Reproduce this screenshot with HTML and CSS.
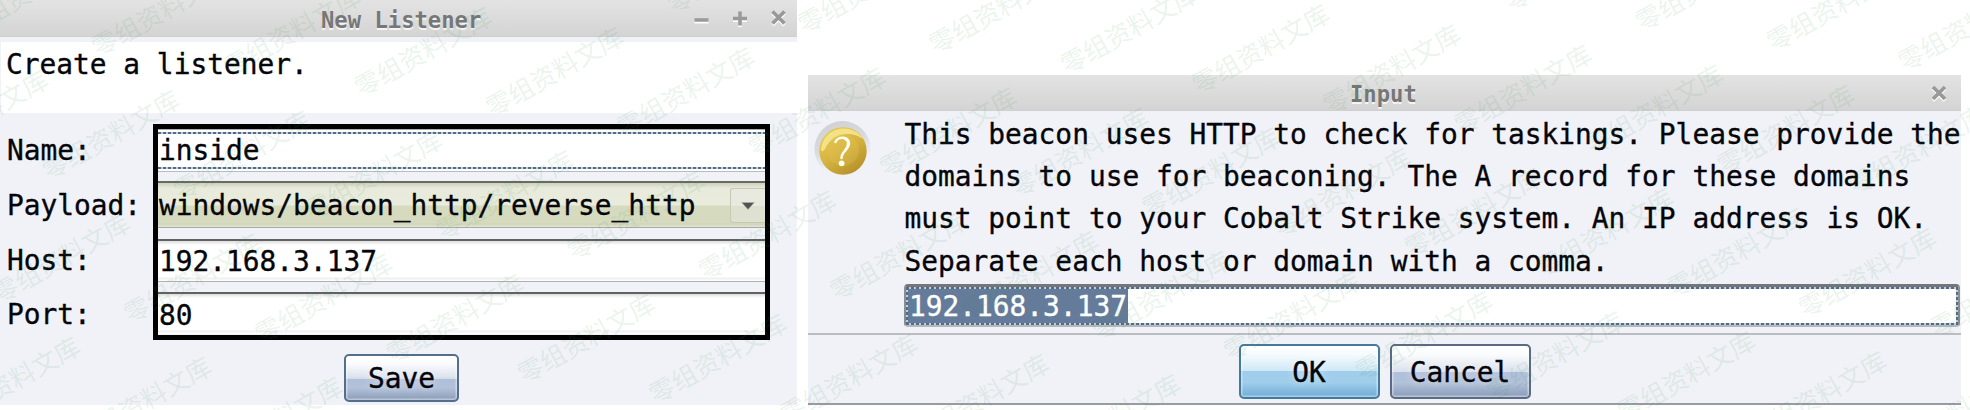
FILE: index.html
```html
<!DOCTYPE html>
<html lang="en">
<head>
<meta charset="utf-8">
<title>New Listener</title>
<link rel="stylesheet" href="styles.css">
</head>
<body>
<main class="desktop">
  <section class="window listener">
    <header class="titlebar">
      <span class="title">New Listener</span>
      <svg class="controls" width="100" height="24" viewBox="0 0 100 24">
        <g fill="none" stroke="#fff" stroke-width="3.6" transform="translate(0 1.6)"><path d="M4.500 12h14M43 10.500h14M50 3.500v14M82.500 3.500l12 12M94.500 3.500l-12 12"/></g>
        <g fill="none" stroke="#999" stroke-width="3.6"><path d="M4.500 12h14M43 10.500h14M50 3.500v14M82.500 3.500l12 12M94.500 3.500l-12 12"/></g>
      </svg>
    </header>
    <p class="intro">Create a listener.</p>
    <div class="form">
      <div class="labels"><label>Name:</label><label>Payload:</label><label>Host:</label><label>Port:</label></div>
      <div class="fields">
        <div class="field name">inside</div>
        <div class="field payload"><span>windows/beacon_http/reverse_http</span>
          <span class="drop"><svg width="14" height="8" viewBox="0 0 14 8"><path d="M0 0h14L7 8z" fill="#aaaba0"/><path d="M1.500 1h11L7 7z" fill="#50534f"/></svg></span>
        </div>
        <div class="field host">192.168.3.137</div>
        <div class="field port">80</div>
      </div>
    </div>
    <div class="button save">Save</div>
  </section>

  <section class="window input">
    <header class="titlebar">
      <span class="title">Input</span>
      <svg class="close" width="20" height="22" viewBox="0 0 20 22">
        <path d="M4 5.600l12 12M16 5.600l-12 12" stroke="#fff" stroke-width="3.600"/>
        <path d="M4 4l12 12M16 4l-12 12" stroke="#999" stroke-width="3.600"/>
      </svg>
    </header>
    <div class="body">
      <svg class="question" width="60" height="60" viewBox="0 0 60 60">
        <defs>
          <linearGradient id="gold" x1=".1" y1="0" x2=".8" y2="1"><stop offset="0" stop-color="#e8cc55"/><stop offset=".5" stop-color="#d6b440"/><stop offset="1" stop-color="#b38d27"/></linearGradient>
          <linearGradient id="rim" x2=".35" y2="1"><stop offset="0" stop-color="#cfcfd0"/><stop offset=".5" stop-color="#d9dade"/><stop offset=".85" stop-color="#f0f2f8"/></linearGradient>
        </defs>
        <circle cx="29.500" cy="29" r="28" fill="url(#rim)"/>
        <circle cx="30" cy="31" r="23.700" fill="url(#gold)"/>
        <path d="M8 29C10 14 22 8 32 8.500C40 9 47 13 50 19C36 9 18 15 12 29C10 32 8 32 8 29z" fill="#f8e78e" opacity=".85"/>
        <circle cx="30" cy="30" r="16" fill="#e3c556" opacity=".3"/>
        <path d="M22.500 22C24 16.500 36.500 15.500 36 24C35.500 30 28.500 31 28.500 38" fill="none" stroke="#fffdf0" stroke-width="2.500" stroke-linecap="round"/>
        <path d="M31 18.500C37 19.500 35.500 27 32 30" fill="none" stroke="#fffdf0" stroke-width="2.500"/>
        <circle cx="28.600" cy="43.300" r="2.900" fill="#fffdf0"/>
      </svg>
      <div class="message">
        <p>This beacon uses HTTP to check for taskings. Please provide the<br>domains to use for beaconing. The A record for these domains<br>must point to your Cobalt Strike system. An IP address is OK.<br>Separate each host or domain with a comma.</p>
        <div class="entry"><div class="focus"><span class="selected">192.168.3.137</span></div></div>
      </div>
    </div>
    <footer class="actions">
      <div class="button ok">OK</div>
      <div class="button cancel">Cancel</div>
    </footer>
  </section>
</main>
<svg class="watermark" id="watermark" width="1970" height="410" aria-hidden="true"></svg>
<script src="watermark.js"></script>
</body>
</html>
```
FILE: styles.css
```css
* { box-sizing: border-box; }
body {
  margin: 0;
  width: 1970px;
  height: 410px;
  overflow: hidden;
  background: #fff;
  color: #05050a;
  font: 27.85px "DejaVu Sans Mono", monospace;
  -webkit-text-stroke: .35px;
}
p { margin: 0; }
.desktop { display: flex; align-items: flex-start; gap: 11px; }
.window { background: #f0f2f8; }
.titlebar {
  display: flex;
  align-items: center;
  background: linear-gradient(#e3e3e3, #d4d4d4);
  border-bottom: 1px solid #cfcfd1;
}
.title {
  color: #777;
  font-size: 22.2px;
  font-weight: bold;
  line-height: 26px;
  text-shadow: 0 2px 0 #f4f4f4;
  -webkit-text-stroke: 0;
}

.listener { width: 797px; height: 405px; }
.listener .titlebar { height: 37px; padding: 4px 7px 0 321px; justify-content: space-between; }
.intro {
  height: 71px;
  margin: 5px 0 0 1px;
  padding: 7px 0 0 5px;
  background: #fff;
  line-height: 32px;
}
.form { display: flex; height: 227px; padding: 11px 27px 0 7px; }
.labels { width: 146px; }
.labels label { display: block; height: 54.8px; line-height: 54.8px; white-space: nowrap; }
.fields {
  width: 617px;
  height: 216px;
  border: 5px solid #000;
  display: flex;
  flex-direction: column;
  white-space: nowrap;
}
.field { background: #fff; flex: none; padding-left: 1px; }
.name {
  height: 43px;
  line-height: 35px;
  margin-bottom: 9px;
  background:
    repeating-linear-gradient(90deg, #526d8b 0 3px, #c4ccd5 3px 5px) 0 2px / 100% 2px no-repeat,
    repeating-linear-gradient(90deg, #526d8b 0 3px, #c4ccd5 3px 5px) 0 37px / 100% 2px no-repeat,
    #fff;
  border-top: 1px solid #aaa;
  border-bottom: 1px solid #b9bcbe;
  padding-top: 3px;
}
.payload {
  height: 47px;
  margin-bottom: 11px;
  border-top: 2px solid #696b61;
  border-bottom: 1px solid #a9ac9d;
  background: linear-gradient(#cdd0bf 0, #e8ebdb 5px, #e9ecdc 22px, #d6dbbf 23px, #d6dbbf 40px, #cfd3ba 41px, #e4e7d7 44px);
  display: flex;
  justify-content: space-between;
  line-height: 45px;
}
.drop {
  width: 35px;
  height: 35px;
  margin-top: 5px;
  border: 1px solid #c6cab3;
  border-right: 0;
  border-radius: 3px 0 0 3px;
  background: linear-gradient(#e8eadf 0 50%, #dee1d0 50%);
  display: flex;
  align-items: center;
  justify-content: center;
}
.host {
  height: 43px;
  margin-bottom: 10px;
  line-height: 41px;
  border-top: 2px solid #606264;
  border-bottom: 1px solid #aeb1b2;
  background: linear-gradient(#ddd 0, #fff 4px, #fff 36px, #eee 37px, #fff 40px);
}
.port {
  height: 42px;
  padding-top: 1px;
  line-height: 41px;
  border-top: 2px solid #606264;
  background: linear-gradient(#ddd 0, #fff 4px, #fff 36px, #eee 37px, #fff 40px);
}
.button {
  border: 2px solid #5a6b83;
  border-radius: 5px;
  background: linear-gradient(#fff 0, #fafbfd 18%, #d9e0eb 51%, #b0bfda 52%, #b2c2d9 72%, #8a9cba 100%);
  box-shadow: inset 0 0 0 1.5px rgba(255,255,255,.4);
  text-align: center;
  text-shadow: 0 0 8px rgba(255,255,255,.6);
}
.save { width: 115px; height: 48px; margin: 14px 0 0 344px; line-height: 46px; border-color: #546f8e; }

.input { width: 1153px; height: 330px; margin-top: 75px; border-bottom: 2px solid #999c9f; }
.input .titlebar { height: 36px; padding: 2px 12px 0 542px; justify-content: space-between; }
.body { height: 222px; display: flex; }
.question { flex: none; margin: 9px 23px 0 5px; }
.message { width: 1056px; margin-left: 8px; white-space: nowrap; }
.message p { height: 173px; padding: 3px 0 0 .5px; line-height: 42.2px; }
.entry {
  height: 43px;
  border: 2px solid #8b8d90;
  border-top: 3px solid #747679;
  border-bottom-color: #b6b9bb;
  border-radius: 4px;
  background: #fff;
}
.focus {
  height: 38px;
  padding: 2px;
  background:
    repeating-linear-gradient(90deg, #526d8b 0 3px, #c4ccd5 3px 5px) 0 0 / 100% 2px no-repeat,
    repeating-linear-gradient(90deg, #526d8b 0 3px, #c4ccd5 3px 5px) 0 100% / 100% 2px no-repeat,
    repeating-linear-gradient(#526d8b 0 3px, #c4ccd5 3px 5px) 0 0 / 2px 100% no-repeat,
    repeating-linear-gradient(#526d8b 0 3px, #c4ccd5 3px 5px) 100% 0 / 2px 100% no-repeat,
    #fff;
}
.selected {
  display: block;
  width: 220px;
  height: 34px;
  padding-left: 1px;
  background: #647b9a;
  color: #fff;
  line-height: 35px;
}
.actions {
  height: 70px;
  display: flex;
  justify-content: center;
  gap: 10px;
  padding-top: 9px;
  border-top: 2px solid #bbbdc0;
}
.actions .button { width: 141px; height: 55px; line-height: 53px; }
.actions .ok {
  border-color: #447b9d;
  background: linear-gradient(#fff 0, #f4fafd 18%, #cfe8f6 49%, #a0cdea 50%, #9fceeb 72%, #70abd5 100%);
}

.watermark { position: absolute; left: 0; top: 0; pointer-events: none; }
.watermark text {
  fill: rgba(50, 145, 70, .115);
  font: 25.5px "Noto Sans CJK SC", sans-serif;
  text-anchor: middle;
  -webkit-text-stroke: 0;
}
```
FILE: watermark.js
```js
// Tiles the watermark over a skewed lattice; each tile is anchored on its first glyph.
const layer = document.getElementById("watermark");
for (let row = -6; row <= 5; row++) {
  for (let col = -4; col <= 17; col++) {
    const x = 105 + col * 131.3 - row * 49.7;
    const y = 43 + col * 20.1 + row * 123.3;
    if (x < -115 || x > 1978 || y < -9 || y > 470) continue;
    const t = document.createElementNS("http://www.w3.org/2000/svg", "text");
    t.setAttribute("transform", `translate(${x} ${y}) rotate(-29.5)`);
    t.setAttribute("x", 63.75);
    t.setAttribute("y", 9.5);
    t.textContent = "零组资料文库";
    layer.appendChild(t);
  }
}
```
